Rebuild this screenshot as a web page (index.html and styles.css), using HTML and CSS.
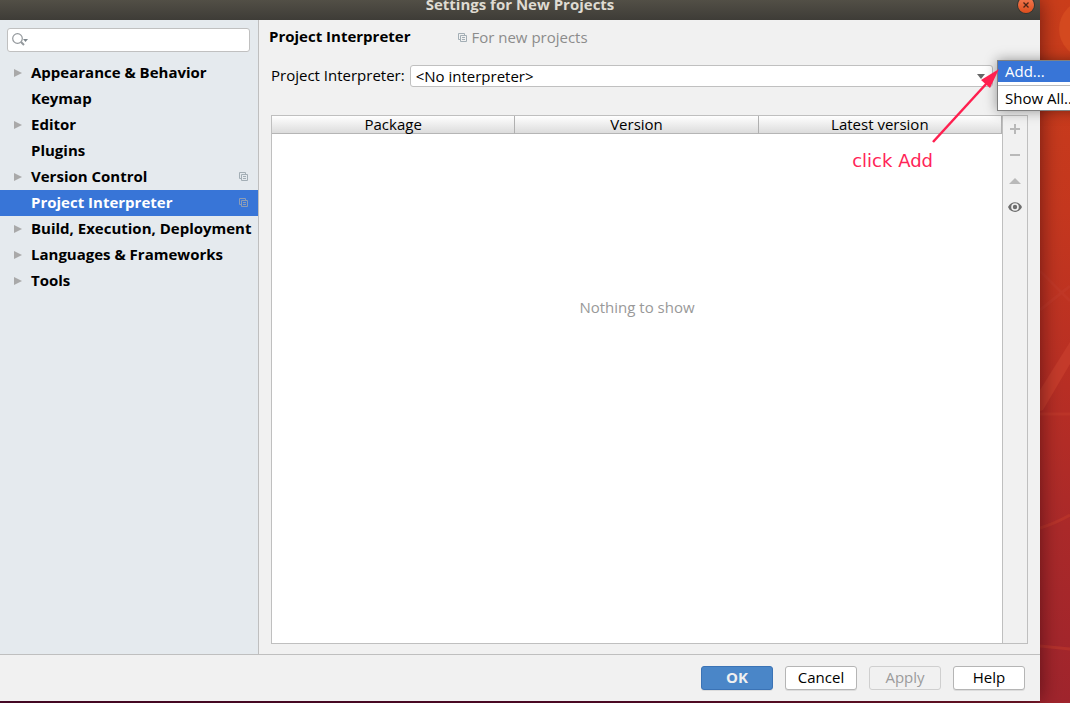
FILE: index.html
```html
<!DOCTYPE html>
<html lang="en">
<head>
<meta charset="utf-8">
<title>Settings for New Projects</title>
<link rel="stylesheet" href="styles.css">
</head>
<body>
<svg class="defs" aria-hidden="true">
  <symbol id="copy" viewBox="0 0 9 10">
    <path d="M2 6.500H.5V.5H6.500V2M2.500 2.500H8.500V8.500H2.500ZM4 4.500H7M4 6.500H7" fill="none" stroke="currentColor"/>
  </symbol>
  <symbol id="branch" viewBox="0 0 8 8"><path d="M0 0L8 4L0 8Z" fill="currentColor"/></symbol>
</svg>
<svg class="wallpaper" viewBox="0 0 30 703" preserveAspectRatio="none" aria-hidden="true">
  <circle cx="48" cy="29" r="29" fill="#d54a20"/>
  <g fill="none" stroke="#c43c2c" stroke-opacity=".5" stroke-width="3">
    <path d="M0 271L30 301M0 310L30 286M0 414H30M0 528Q16 523 30 515M0 646L30 649"/>
  </g>
  <path d="M0 390L30 342V364L3 410L0 411Z" fill="#c53b2b"/>
</svg>
<div class="window">
  <header class="titlebar">
    <h1>Settings for New Projects</h1>
    <button class="close" aria-label="Close"><svg viewBox="0 0 16 16"><path d="M5.500 5.500L10.500 10.500M10.500 5.500L5.500 10.500" stroke="#4b2417" stroke-width="1.300"/></svg></button>
  </header>
  <div class="content">
    <aside class="sidebar">
      <label class="search">
        <svg viewBox="0 0 17 14" aria-hidden="true"><circle cx="5.500" cy="5.500" r="4.800" fill="none" stroke="#93989c" stroke-width="1.200"/><path d="M9 9L12 12" stroke="#93989c" stroke-width="2"/><path d="M11 6H16L13.500 9Z" fill="#7c858b"/></svg>
        <input type="text" aria-label="Search settings">
      </label>
      <nav class="tree">
        <a href="#appearance"><svg class="arrow"><use href="#branch"/></svg><span>Appearance &amp; Behavior</span></a>
        <a href="#keymap"><i class="arrow"></i><span>Keymap</span></a>
        <a href="#editor"><svg class="arrow"><use href="#branch"/></svg><span>Editor</span></a>
        <a href="#plugins"><i class="arrow"></i><span>Plugins</span></a>
        <a href="#vcs"><svg class="arrow"><use href="#branch"/></svg><span>Version Control</span><svg class="copy"><use href="#copy"/></svg></a>
        <a href="#interpreter" class="selected" aria-current="page"><i class="arrow"></i><span>Project Interpreter</span><svg class="copy"><use href="#copy"/></svg></a>
        <a href="#build"><svg class="arrow"><use href="#branch"/></svg><span>Build, Execution, Deployment</span></a>
        <a href="#languages"><svg class="arrow"><use href="#branch"/></svg><span>Languages &amp; Frameworks</span></a>
        <a href="#tools"><svg class="arrow"><use href="#branch"/></svg><span>Tools</span></a>
      </nav>
    </aside>
    <main class="page">
      <div class="heading">
        <h2>Project Interpreter</h2>
        <p><svg class="copy"><use href="#copy"/></svg><span>For new projects</span></p>
      </div>
      <div class="field">
        <label for="interp">Project Interpreter:</label>
        <div class="combo">
          <select id="interp"><option>&lt;No interpreter&gt;</option></select>
          <svg viewBox="0 0 8 5" aria-hidden="true"><path d="M0 0H8L4 5Z" fill="#666"/></svg>
        </div>
      </div>
      <div class="packages">
        <table>
          <thead><tr><th>Package</th><th>Version</th><th>Latest version</th></tr></thead>
          <tbody><tr><td colspan="3">Nothing to show</td></tr></tbody>
        </table>
        <div class="tools">
          <button aria-label="Install"><svg viewBox="0 0 14 14"><path d="M7 2V12M2 7H12" stroke="#b9b9b9" stroke-width="2"/></svg></button>
          <button aria-label="Uninstall"><svg viewBox="0 0 14 14"><path d="M2 7H12" stroke="#b9b9b9" stroke-width="2"/></svg></button>
          <button aria-label="Upgrade"><svg viewBox="0 0 14 14"><path d="M1 10L7 4L13 10Z" fill="#b9b9b9"/></svg></button>
          <button aria-label="Show early releases"><svg viewBox="0 0 14 14"><path d="M0 7C3 .5 11 .5 14 7C11 13.500 3 13.500 0 7Z" fill="#6e6e6e"/><circle cx="7" cy="7" r="3.800" fill="#f1f1f1"/><circle cx="7" cy="7" r="2.200" fill="#6e6e6e"/></svg></button>
        </div>
      </div>
    </main>
  </div>
  <footer class="actions">
    <button class="primary">OK</button>
    <button>Cancel</button>
    <button disabled>Apply</button>
    <button>Help</button>
  </footer>
  <div class="menu" role="menu">
    <button role="menuitem" class="active">Add...</button>
    <hr>
    <button role="menuitem">Show All...</button>
  </div>
  <p class="note">click Add</p>
  <svg class="pointer" viewBox="0 0 70 76" aria-hidden="true"><path d="M4 74L58 15" stroke="#ff1f4f" stroke-width="2.500"/><path d="M70 1L61 20L52 12Z" fill="#ff1f4f"/></svg>
</div>
</body>
</html>
```
FILE: styles.css
```css
* { box-sizing: border-box; }

body {
  margin: 0;
  height: 100vh;
  overflow: hidden;
  position: relative;
  padding: 0 30px 2px 0;
  background: linear-gradient(90deg, #4d0a2d 0%, #5a0d2e 60%, #7d1a2b 100%);
  font: 15px/20px "Open Sans", "Noto Sans", sans-serif;
  color: #000;
}

h1, h2, p { margin: 0; font-size: inherit; }
button, input, select { font: inherit; color: inherit; margin: 0; }
svg { display: block; flex: none; }

.defs { position: absolute; width: 0; height: 0; }

.wallpaper {
  position: absolute;
  top: 0;
  right: 0;
  width: 30px;
  height: 100%;
  background: linear-gradient(#cb3e1b 0%, #c5381f 30%, #b82f25 55%, #ab2a2a 75%, #a0252d 100%);
}

.window {
  position: relative;
  height: 100%;
  display: flex;
  flex-direction: column;
  background: #f1f1f1;
  box-shadow: 0 0 20px rgba(40, 0, 10, .6);
}

.titlebar {
  position: relative;
  height: 20px;
  flex: none;
  display: flex;
  justify-content: center;
  background: linear-gradient(#524f46, #3e3c37);
  color: #dfdbd2;
}
.titlebar h1 { line-height: 8px; font-weight: 700; }

.close {
  position: absolute;
  top: -3px;
  right: 6px;
  width: 16px;
  height: 16px;
  padding: 0;
  border: 0;
  border-radius: 50%;
  background: linear-gradient(#f47b53, #df4e1d);
  box-shadow: 0 0 0 1px #37342f;
}

.content { flex: 1; display: flex; min-height: 0; }

.sidebar {
  width: 259px;
  flex: none;
  border-right: 1px solid #bfbfbf;
  background: #e5eaee;
}

.search {
  display: flex;
  align-items: center;
  height: 24px;
  margin: 8px 8px 8px 7px;
  padding-left: 4px;
  border: 1px solid #c0c0c0;
  border-radius: 3px;
  background: #fff;
}
.search svg { width: 17px; height: 14px; }
.search input { flex: 1; min-width: 0; border: 0; outline: 0; background: none; }

.tree a {
  display: flex;
  align-items: center;
  height: 26px;
  padding: 0 10px 0 14px;
  color: #000;
  font-weight: 700;
  text-decoration: none;
  white-space: nowrap;
}
.tree span { flex: 1; padding-bottom: 2px; }
.tree .selected { background: #3875d7; color: #fff; }
.arrow { width: 8px; height: 8px; margin-right: 9px; color: #a9a9a9; }
.copy { width: 9px; height: 10px; color: #a3aeb5; }
.selected .copy { color: #8d9db5; }

.page {
  flex: 1;
  min-width: 0;
  display: flex;
  flex-direction: column;
  padding: 6px 12px 10px;
}

.heading { display: flex; gap: 48px; height: 20px; margin-left: -2px; }
.heading p { display: flex; align-items: center; gap: 4px; color: #8c8c8c; padding-top: 4px; }
.heading span { padding-bottom: 2px; }

.field {
  display: flex;
  align-items: center;
  gap: 5px;
  height: 22px;
  margin: 19px 35px 28px 0;
}
.field label { flex: none; min-width: 132px; padding-bottom: 2px; }
.combo { position: relative; flex: 1; }
.combo select {
  display: block;
  width: 100%;
  height: 22px;
  padding: 0 5px 1px;
  appearance: none;
  border: 1px solid #c0c0c0;
  border-radius: 3px;
  background: #fff;
}
.combo svg { position: absolute; right: 8px; top: 9px; width: 8px; height: 5px; }

.packages { flex: 1; display: flex; min-height: 0; border: 1px solid #bfbfbf; }
table {
  flex: 1;
  width: 100%;
  height: 100%;
  table-layout: fixed;
  border-spacing: 0;
  background: #fff;
}
th {
  height: 18px;
  padding: 0;
  font-weight: 400;
  line-height: 17px;
  border-right: 1px solid #b0b0b0;
  border-bottom: 1px solid #b5b5b5;
  background: linear-gradient(#fff, #dcdcdc);
}
td { padding: 163px 0 0; vertical-align: top; text-align: center; color: #999; }

.tools { flex: none; width: 25px; border-left: 1px solid #bfbfbf; }
.tools button {
  display: flex;
  align-items: center;
  justify-content: center;
  width: 100%;
  height: 26px;
  padding: 0;
  border: 0;
  background: none;
}
.tools svg { width: 14px; height: 14px; }

.actions {
  flex: none;
  display: flex;
  justify-content: flex-end;
  gap: 12px;
  padding: 11px 15px;
  border-top: 1px solid #bfbfbf;
}
.actions button {
  width: 72px;
  height: 24px;
  padding: 0 0 2px;
  border: 1px solid #b5b5b5;
  border-radius: 3px;
  background: #fff;
  box-shadow: 0 1px 0 #dcdcdc;
}
.actions .primary { background: #4a86c8; border-color: #3b73b5; color: #f0f0f0; font-weight: 700; }
.actions button:disabled { background: #f1f1f1; border-color: #cfcfcf; color: #9b9b9b; box-shadow: none; }

.menu {
  position: absolute;
  left: calc(100% - 43px);
  top: 60px;
  width: 90px;
  border: 1px solid #808080;
  background: #fff;
  box-shadow: 0 0 12px rgba(0, 0, 0, .4);
}
.menu button {
  display: block;
  width: 100%;
  height: 22px;
  padding: 0 7px 2px;
  border: 0;
  background: none;
  text-align: left;
  line-height: 20px;
  white-space: nowrap;
}
.menu .active { height: 21px; background: #3875d7; color: #fff; }
.menu hr { margin: 3px 0 2px; border: 0; border-top: 1px solid #bbb; }

.note {
  position: absolute;
  right: 107px;
  top: 151px;
  font: 18px/20px "DejaVu Sans", sans-serif;
  color: #ff2457;
}
.pointer { position: absolute; right: 41px; top: 68px; width: 70px; height: 76px; }
```
